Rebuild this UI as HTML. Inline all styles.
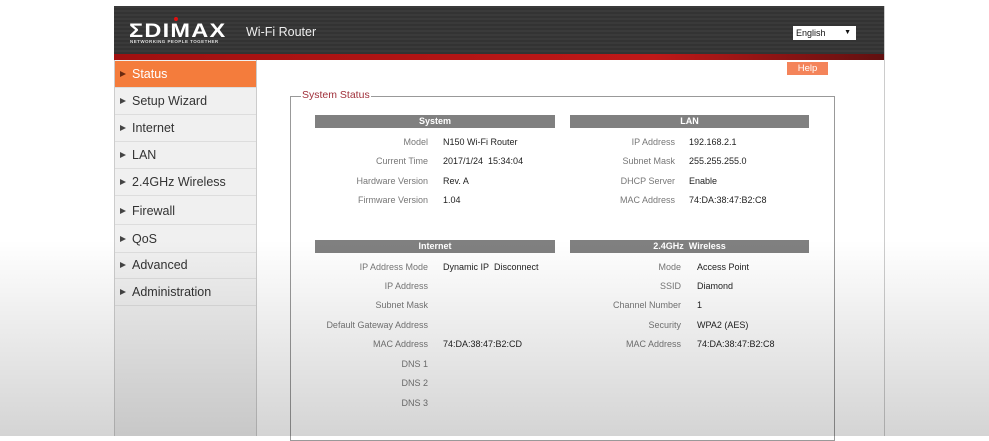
<!DOCTYPE html>
<html><head><style>
*{margin:0;padding:0;box-sizing:border-box}
body{width:989px;height:436px;position:relative;overflow:hidden;background:#fff;font-family:"Liberation Sans",sans-serif}
.a{position:absolute}
.hdr{left:114px;top:6px;width:771px;height:54px;background:repeating-linear-gradient(#3a3a3a 0 2px,#333 2px 4px)}
.red{left:114px;top:54px;width:771px;height:6px;background:linear-gradient(90deg,#a01010,#c01818 70%,#601010)}
.side{left:114px;top:60px;width:143px;height:376px;background:#f0f0f0;border-left:1px solid #ccc;border-right:1px solid #ccc}
.it{position:absolute;left:0;width:141px;height:27px;border-bottom:1px solid #ddd;font-size:12.5px;color:#333;line-height:27px;padding-left:17px}
.it:before{content:"";position:absolute;left:5px;top:10px;border-left:6px solid #444;border-top:3.5px solid transparent;border-bottom:3.5px solid transparent}
.it.on{background:#f47c3c;color:#fff}
.it.on:before{border-left-color:#6a2a10}
.th{height:13px;background:#808080;color:#fff;font-size:9px;font-weight:bold;text-align:center;line-height:13px}
.l{position:absolute;font-size:9px;color:#777;text-align:right;white-space:nowrap}
.v{position:absolute;font-size:9px;color:#222;white-space:nowrap}
</style></head><body>
<div class="a hdr"></div>
<div class="a red"></div>
<div class="a" style="left:174px;top:17px;width:4px;height:4px;border-radius:50%;background:#e01010"></div>
<div class="a" style="left:129px;top:21px;font:900 19px 'Liberation Sans',sans-serif;color:#fff;letter-spacing:1px;transform:scaleX(1.24);transform-origin:left">ΣDIMAX</div>
<div class="a" style="left:130px;top:39px;font:bold 4.5px 'Liberation Sans',sans-serif;color:#ddd;letter-spacing:.45px">NETWORKING PEOPLE TOGETHER</div>
<div class="a" style="left:246px;top:25px;font-size:12.5px;color:#eee">Wi-Fi Router</div>
<div class="a" style="left:793px;top:26px;width:63px;height:14px;background:#fff;font-size:9px;line-height:14px;padding-left:3px;color:#111">English<span style="position:absolute;right:5px;font-size:7px">▼</span></div>
<div class="a" style="left:884px;top:6px;width:1px;height:430px;background:#ccc"></div>
<div class="a side">
<div class="it on" style="top:1px">Status</div>
<div class="it" style="top:28px">Setup Wizard</div>
<div class="it" style="top:55px">Internet</div>
<div class="it" style="top:82px">LAN</div>
<div class="it" style="top:109px">2.4GHz Wireless</div>
<div class="it" style="top:138px">Firewall</div>
<div class="it" style="top:166px">QoS</div>
<div class="it" style="top:192px">Advanced</div>
<div class="it" style="top:219px">Administration</div>
</div>
<div class="a" style="left:787px;top:62px;width:41px;height:13px;background:#f4845a;color:#fff;font-size:9.5px;text-align:center;line-height:13px">Help</div>
<div class="a" style="left:290px;top:96px;width:545px;height:345px;border:1px solid #999"></div>
<div class="a" style="left:301px;top:89px;background:#fff;color:#a0303a;font-size:10.5px;padding:0 1px">System Status</div>

<div class="a th" style="left:315px;top:115px;width:240px">System</div>
<div class="a th" style="left:570px;top:115px;width:239px">LAN</div>
<div class="a th" style="left:315px;top:240px;width:240px">Internet</div>
<div class="a th" style="left:570px;top:240px;width:239px">2.4GHz&nbsp; Wireless</div>

<div class="l" style="right:561px;top:137px">Model</div><div class="v" style="left:443px;top:137px">N150 Wi-Fi Router</div>
<div class="l" style="right:561px;top:156px">Current Time</div><div class="v" style="left:443px;top:156px">2017/1/24&nbsp; 15:34:04</div>
<div class="l" style="right:561px;top:176px">Hardware Version</div><div class="v" style="left:443px;top:176px">Rev. A</div>
<div class="l" style="right:561px;top:195px">Firmware Version</div><div class="v" style="left:443px;top:195px">1.04</div>

<div class="l" style="right:314px;top:137px">IP Address</div><div class="v" style="left:689px;top:137px">192.168.2.1</div>
<div class="l" style="right:314px;top:156px">Subnet Mask</div><div class="v" style="left:689px;top:156px">255.255.255.0</div>
<div class="l" style="right:314px;top:176px">DHCP Server</div><div class="v" style="left:689px;top:176px">Enable</div>
<div class="l" style="right:314px;top:195px">MAC Address</div><div class="v" style="left:689px;top:195px">74:DA:38:47:B2:C8</div>

<div class="l" style="right:561px;top:262px">IP Address Mode</div><div class="v" style="left:443px;top:262px">Dynamic IP&nbsp; Disconnect</div>
<div class="l" style="right:561px;top:281px">IP Address</div>
<div class="l" style="right:561px;top:300px">Subnet Mask</div>
<div class="l" style="right:561px;top:320px">Default Gateway Address</div>
<div class="l" style="right:561px;top:339px">MAC Address</div><div class="v" style="left:443px;top:339px">74:DA:38:47:B2:CD</div>
<div class="l" style="right:561px;top:359px">DNS 1</div>
<div class="l" style="right:561px;top:378px">DNS 2</div>
<div class="l" style="right:561px;top:398px">DNS 3</div>

<div class="l" style="right:308px;top:262px">Mode</div><div class="v" style="left:697px;top:262px">Access Point</div>
<div class="l" style="right:308px;top:281px">SSID</div><div class="v" style="left:697px;top:281px">Diamond</div>
<div class="l" style="right:308px;top:300px">Channel Number</div><div class="v" style="left:697px;top:300px">1</div>
<div class="l" style="right:308px;top:320px">Security</div><div class="v" style="left:697px;top:320px">WPA2 (AES)</div>
<div class="l" style="right:308px;top:339px">MAC Address</div><div class="v" style="left:697px;top:339px">74:DA:38:47:B2:C8</div>

<div class="a" style="left:0;top:0;width:989px;height:436px;background:linear-gradient(rgba(0,0,0,0) 0,rgba(0,0,0,0) 55%,rgba(0,0,0,.17) 100%);pointer-events:none"></div>
</body></html>
